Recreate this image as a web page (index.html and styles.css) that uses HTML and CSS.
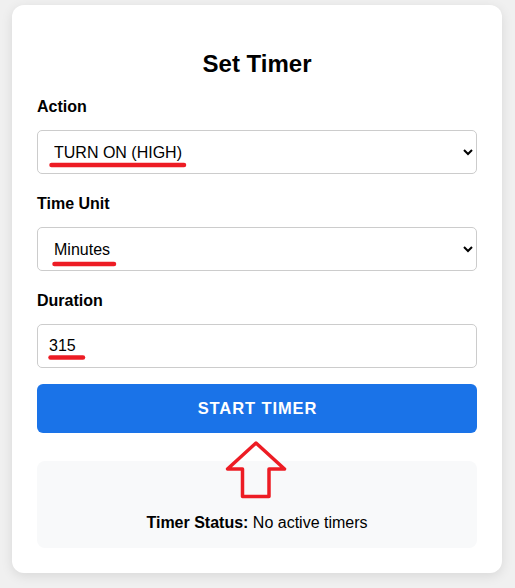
FILE: index.html
```html
<!DOCTYPE html>
<html lang="en">
<head>
<meta charset="utf-8">
<title>Set Timer</title>
<link rel="stylesheet" href="styles.css">
</head>
<body>
<div class="page">
  <div class="card">
    <h2 class="title">Set Timer</h2>
    <div class="form">
      <div class="field">
        <label class="label" for="action">Action</label>
        <select class="control" id="action">
          <option>TURN ON (HIGH)</option>
          <option>TURN ON (LOW)</option>
          <option>TURN OFF</option>
        </select>
      </div>
      <div class="field">
        <label class="label" for="unit">Time Unit</label>
        <select class="control" id="unit">
          <option>Minutes</option>
          <option>Hours</option>
          <option>Seconds</option>
        </select>
      </div>
      <div class="field field-last">
        <label class="label" for="duration">Duration</label>
        <input class="control input" id="duration" type="number" value="315">
      </div>
      <button class="start-btn" type="button">Start Timer</button>
    </div>
    <div class="status">
      <p class="status-text"><strong>Timer Status:</strong> No active timers</p>
    </div>
    <svg class="annotations" width="490" height="568" viewBox="0 0 490 568" aria-hidden="true">
      <g fill="none" stroke="#ed1c24" stroke-linecap="round">
        <line x1="39.5" y1="160" x2="172" y2="160" stroke-width="4.5"/>
        <line x1="42.5" y1="259" x2="102" y2="259" stroke-width="4.5"/>
        <line x1="38.5" y1="352.5" x2="71" y2="352.5" stroke-width="4.5"/>
        <polygon points="244,438 272.5,464 257,464 257,491.5 230.5,491.5 230.5,464 215.5,464" stroke-width="3.5" stroke-linejoin="round"/>
      </g>
    </svg>
  </div>
</div>
</body>
</html>
```

FILE: styles.css
```css
html, body {
  margin: 0;
  padding: 0;
  background: #f0f0f0;
  font-family: "Liberation Sans", Arial, sans-serif;
  color: #000;
}

.page {
  padding: 5px 13px 15px 12px;
}

.card {
  position: relative;
  box-sizing: border-box;
  width: 490px;
  padding: 25px;
  background: #fff;
  border-radius: 12px;
  box-shadow: 0 3px 12px rgba(0, 0, 0, 0.1);
}

.title {
  margin: 19.92px 0;
  font-size: 24px;
  font-weight: bold;
  text-align: center;
}

.form {
  display: flex;
  flex-direction: column;
}

.field {
  display: flex;
  flex-direction: column;
  gap: 14px;
  margin-bottom: 21px;
}

.field-last {
  margin-bottom: 16.5px;
}

.label {
  font-size: 16px;
  font-weight: bold;
}

.control {
  box-sizing: border-box;
  width: 100%;
  height: 44px;
  padding: 12px;
  font-family: "Liberation Sans", Arial, sans-serif;
  font-size: 16px;
  color: #000;
  background: #fff;
  border: 1px solid #ccc;
  border-radius: 5px;
  margin: 0;
}

.input {
  height: 44px;
  padding: 12px 11px;
}

.start-btn {
  box-sizing: border-box;
  width: 100%;
  height: 49px;
  margin: 0;
  padding: 0;
  border: none;
  border-radius: 6px;
  background: #1a73e8;
  color: #fff;
  font-family: "Liberation Sans", Arial, sans-serif;
  font-size: 16.5px;
  font-weight: bold;
  letter-spacing: 0.9px;
  text-transform: uppercase;
  text-indent: 1px;
}

.status {
  margin-top: 28px;
  padding: 53px 15px 16px;
  background: #f8f9fa;
  border-radius: 8px;
  text-align: center;
}

.status-text {
  margin: 0;
  font-size: 16px;
}

.annotations {
  position: absolute;
  left: 0;
  top: 0;
  pointer-events: none;
}
```
